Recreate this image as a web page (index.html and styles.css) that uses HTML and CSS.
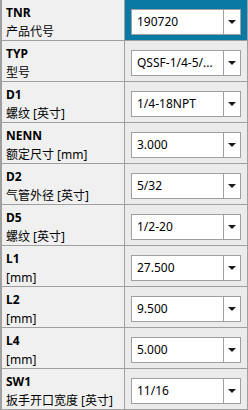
FILE: index.html
```html
<!DOCTYPE html>
<html>
<head>
<meta charset="utf-8">
<link rel="stylesheet" href="styles.css">
</head>
<body>
<div class="grid">
  <div class="row">
    <div class="label"><b>TNR</b><span>产品代号</span></div>
    <div class="value selected"><div class="combo"><span class="text">190720</span><span class="btn"><i></i></span></div></div>
  </div>
  <div class="row">
    <div class="label"><b>TYP</b><span>型号</span></div>
    <div class="value"><div class="combo"><span class="text">QSSF-1/4-5/...</span><span class="btn"><i></i></span></div></div>
  </div>
  <div class="row">
    <div class="label"><b>D1</b><span>螺纹 [英寸]</span></div>
    <div class="value"><div class="combo"><span class="text">1/4-18NPT</span><span class="btn"><i></i></span></div></div>
  </div>
  <div class="row">
    <div class="label"><b>NENN</b><span>额定尺寸 [mm]</span></div>
    <div class="value"><div class="combo"><span class="text">3.000</span><span class="btn"><i></i></span></div></div>
  </div>
  <div class="row">
    <div class="label"><b>D2</b><span>气管外径 [英寸]</span></div>
    <div class="value"><div class="combo"><span class="text">5/32</span><span class="btn"><i></i></span></div></div>
  </div>
  <div class="row">
    <div class="label"><b>D5</b><span>螺纹 [英寸]</span></div>
    <div class="value"><div class="combo"><span class="text">1/2-20</span><span class="btn"><i></i></span></div></div>
  </div>
  <div class="row">
    <div class="label"><b>L1</b><span>[mm]</span></div>
    <div class="value"><div class="combo"><span class="text">27.500</span><span class="btn"><i></i></span></div></div>
  </div>
  <div class="row">
    <div class="label"><b>L2</b><span>[mm]</span></div>
    <div class="value"><div class="combo"><span class="text">9.500</span><span class="btn"><i></i></span></div></div>
  </div>
  <div class="row">
    <div class="label"><b>L4</b><span>[mm]</span></div>
    <div class="value"><div class="combo"><span class="text">5.000</span><span class="btn"><i></i></span></div></div>
  </div>
  <div class="row">
    <div class="label"><b>SW1</b><span>扳手开口宽度 [英寸]</span></div>
    <div class="value"><div class="combo"><span class="text">11/16</span><span class="btn"><i></i></span></div></div>
  </div>
</div>
</body>
</html>
```

FILE: styles.css
```css
html, body {
  margin: 0;
  padding: 0;
  background: #f0f0f0;
}
body {
  font-family: "Noto Sans", "Noto Sans CJK SC", sans-serif;
  font-size: 12px;
  color: #000;
}
.grid {
  width: 248px;
  display: flex;
  flex-direction: column;
}
.row {
  display: grid;
  grid-template-columns: 122px 122px;
  column-gap: 1px;
  height: 40px;
  border-bottom: 1px solid #a0a0a0;
  border-left: 2px solid #a0a0a0;
  border-right: 1px solid #a0a0a0;
  background: #a0a0a0;
}
.label {
  background: #f0f0f0;
  display: flex;
  flex-direction: column;
  padding: 3px 0 0 4px;
  line-height: 19px;
  white-space: nowrap;
  overflow: hidden;
}
.label b {
  font-weight: bold;
  font-size: 12px;
}
.label span {
  font-size: 12px;
}
.value {
  background: #ebebeb;
  display: flex;
  align-items: flex-start;
  padding: 9px 0 0 6px;
}
.value.selected {
  background: #0a7aa5;
}
.combo {
  width: 108px;
  height: 24px;
  border: 1px solid #a0a0a0;
  background: #fff;
  display: flex;
}
.text {
  flex: 1;
  min-width: 0;
  padding-left: 5px;
  line-height: 24px;
  white-space: nowrap;
  overflow: hidden;
}
.btn {
  width: 16px;
  border-left: 1px solid #a0a0a0;
  display: flex;
  align-items: center;
  justify-content: center;
}
.btn i {
  display: block;
  width: 0;
  height: 0;
  border-left: 4px solid transparent;
  border-right: 4px solid transparent;
  border-top: 4px solid #1a1a1a;
}
```
